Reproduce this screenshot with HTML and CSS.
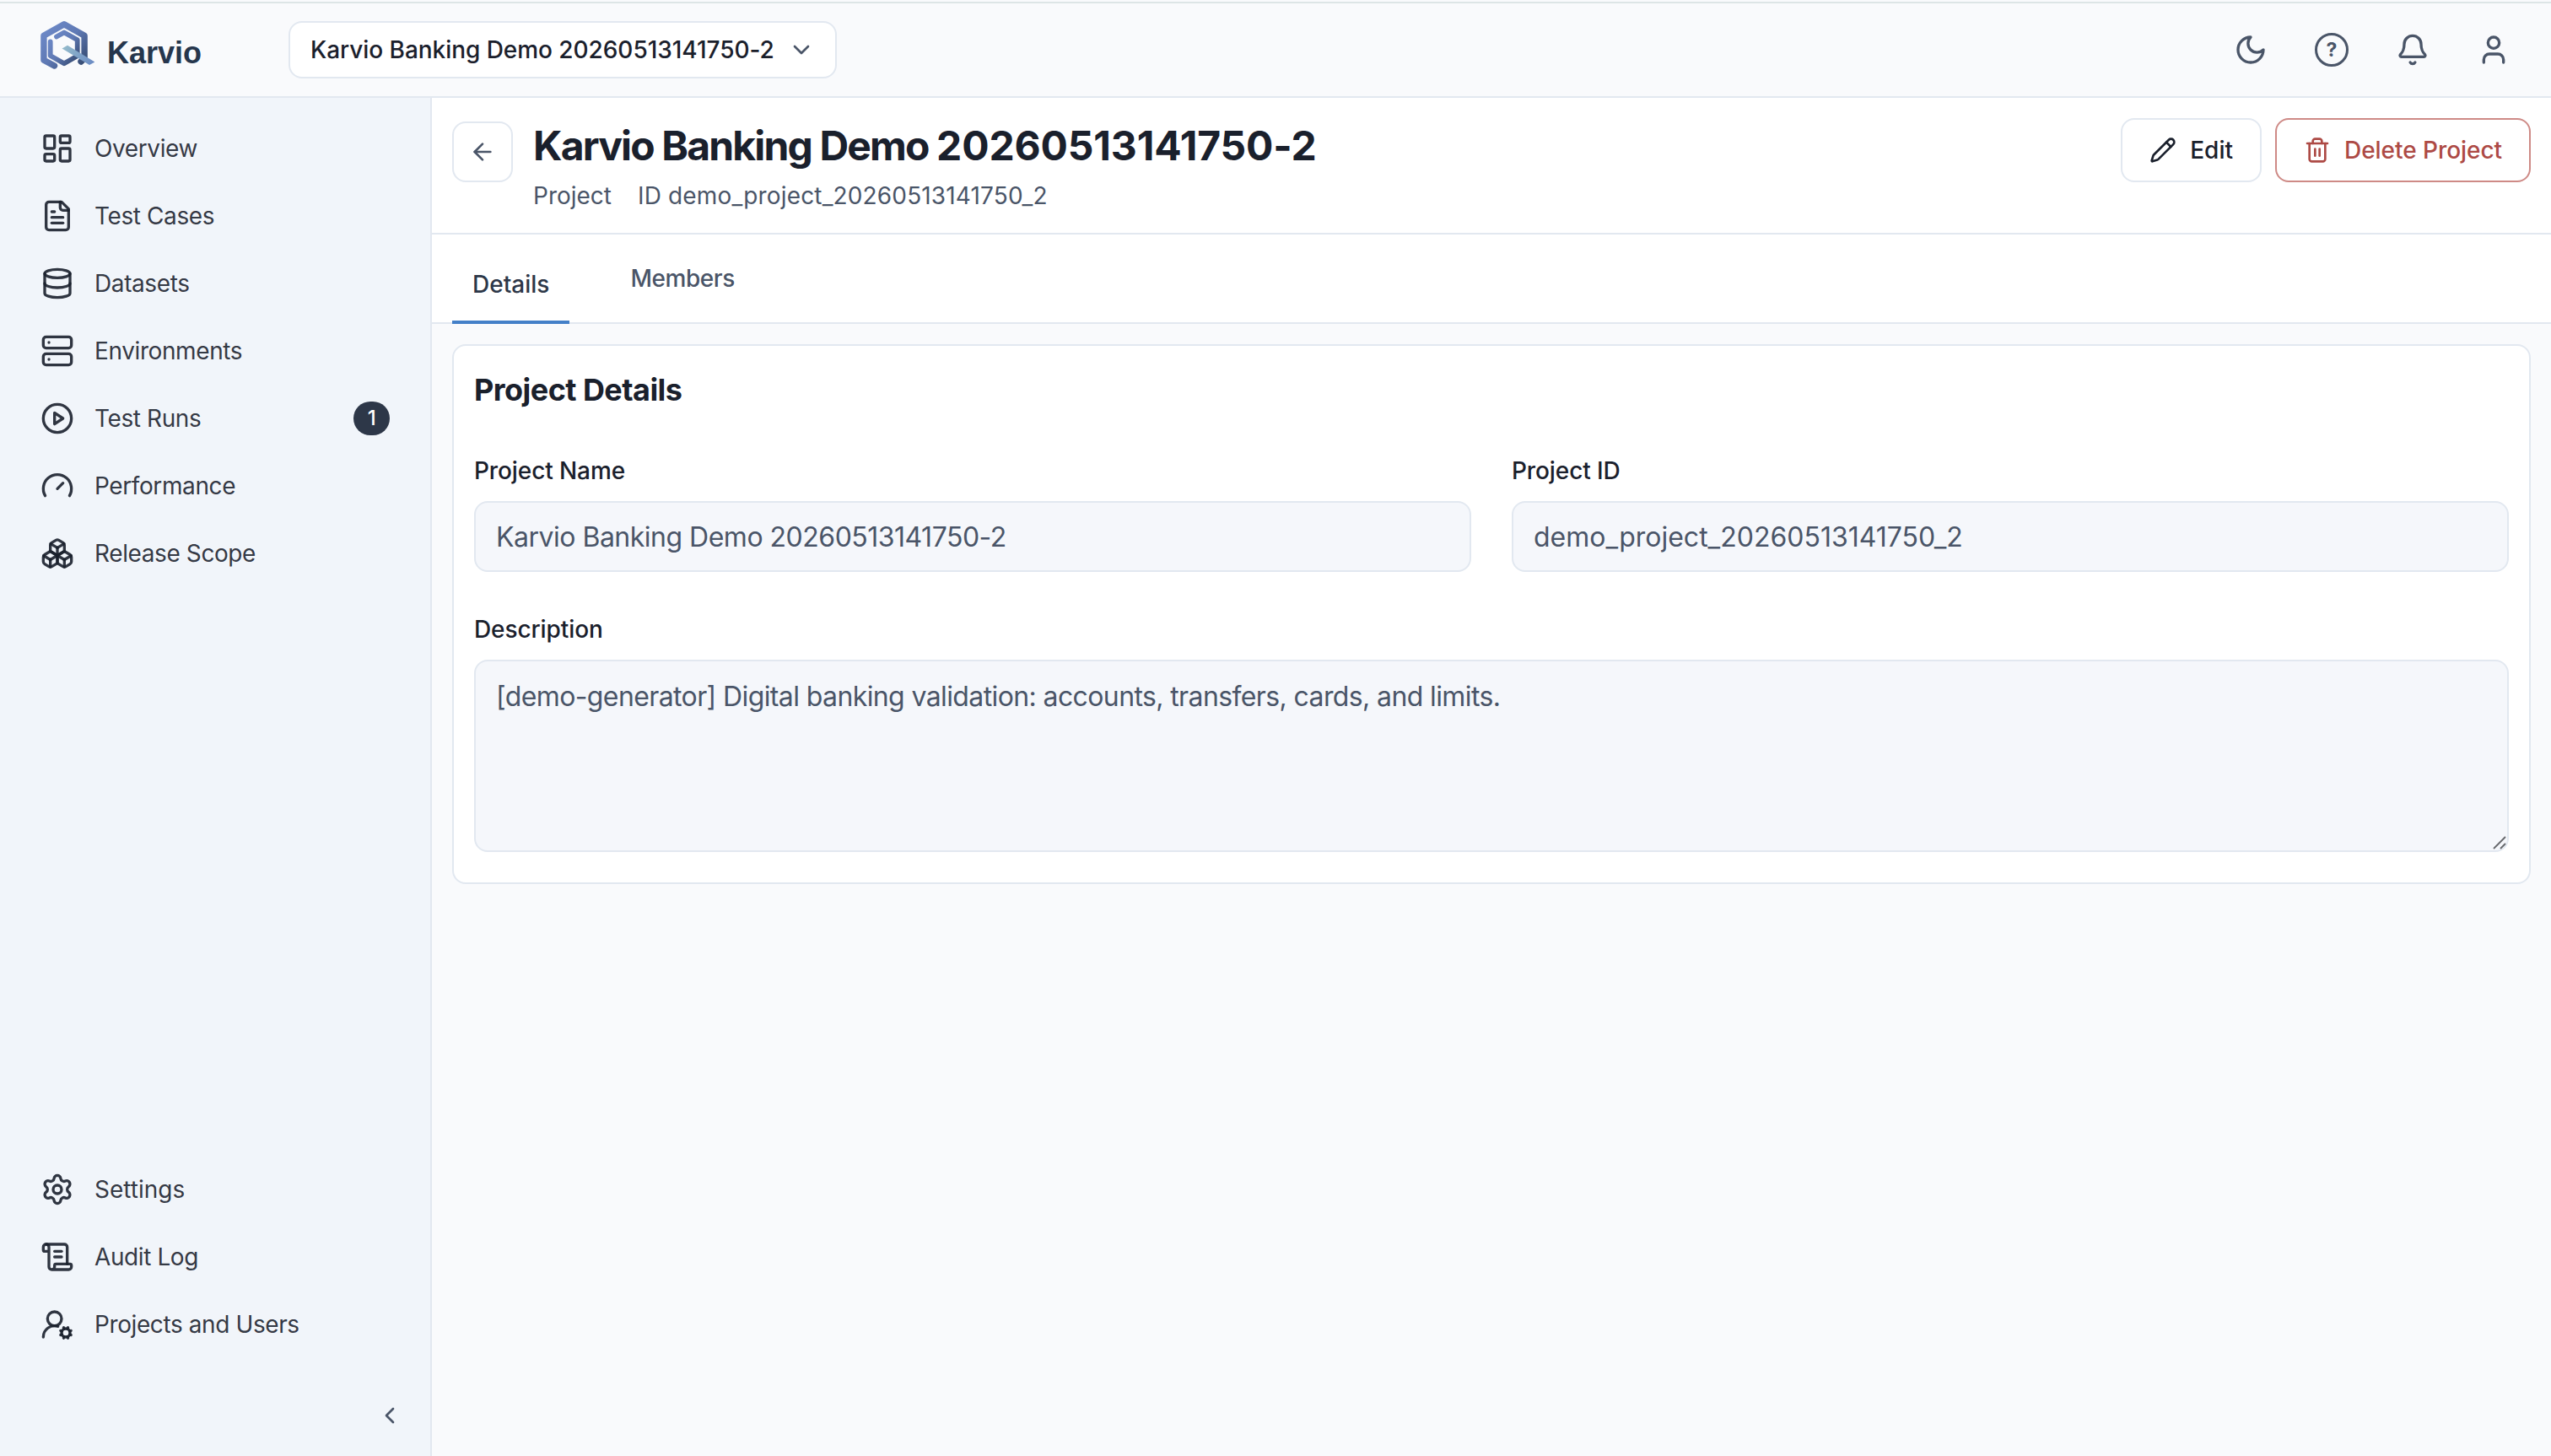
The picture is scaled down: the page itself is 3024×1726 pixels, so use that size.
FILE: index.html
```html
<!DOCTYPE html>
<html lang="en">
<head>
  <meta charset="utf-8">
  <title>Karvio</title>
  <link rel="stylesheet" href="styles.css">
</head>
<body>

  <header class="topbar">
    <div class="brand">
      <svg class="logo" viewBox="0 0 64 57">
        <defs>
          <linearGradient id="hexGrad" x1="0" y1="0" x2="1" y2="1">
            <stop offset="0" stop-color="#6f8bca"/>
            <stop offset="0.5" stop-color="#5f79b4"/>
            <stop offset="1" stop-color="#33486e"/>
          </linearGradient>
          <linearGradient id="tailGrad" gradientUnits="userSpaceOnUse" x1="26" y1="30" x2="62" y2="50">
            <stop offset="0" stop-color="#95bccb"/>
            <stop offset="1" stop-color="#6c8cc4"/>
          </linearGradient>
        </defs>
        <g fill="none" stroke="url(#hexGrad)" stroke-linecap="round" stroke-linejoin="round">
          <path stroke-width="7.4" d="M16.5 53 L3.9 46.2 V17.3 L28 3.8 L52.1 17.3 V44 L48 48"/>
          <path stroke-width="5.8" d="M19 18.5 L28 13.5 L43.7 22.3 V41.3 L28 50.2 L11.7 41 V24.5"/>
        </g>
        <path fill="url(#tailGrad)" d="M25.5 32.5 L32 28.7 L64.3 48.5 L58 52 Z"/>
      </svg>
      <span class="brand-name">Karvio</span>
    </div>

    <button class="project-select">
      Karvio Banking Demo 20260513141750-2
      <svg class="icon-sm" viewBox="0 0 24 24"><path d="m6 9 6 6 6-6"/></svg>
    </button>

    <div class="topbar-icons">
      <svg class="icon" viewBox="0 0 24 24"><path d="M12 3a6 6 0 0 0 9 9 9 9 0 1 1-9-9Z"/></svg>
      <span class="help">?</span>
      <svg class="icon" viewBox="0 0 24 24"><path d="M10.268 21a2 2 0 0 0 3.464 0"/><path d="M3.262 15.326A1 1 0 0 0 4 17h16a1 1 0 0 0 .74-1.673C19.41 13.956 18 12.499 18 8A6 6 0 0 0 6 8c0 4.499-1.411 5.956-2.738 7.326"/></svg>
      <svg class="icon" viewBox="0 0 24 24"><path d="M19 21v-2a4 4 0 0 0-4-4H9a4 4 0 0 0-4 4v2"/><circle cx="12" cy="7" r="4"/></svg>
    </div>
  </header>

  <div class="layout">
    <nav class="sidebar">
      <a class="nav-item">
        <svg class="icon" viewBox="0 0 24 24"><rect width="7" height="9" x="3" y="3" rx="1"/><rect width="7" height="5" x="14" y="3" rx="1"/><rect width="7" height="9" x="14" y="12" rx="1"/><rect width="7" height="5" x="3" y="16" rx="1"/></svg>
        Overview
      </a>
      <a class="nav-item">
        <svg class="icon" viewBox="0 0 24 24"><path d="M15 2H6a2 2 0 0 0-2 2v16a2 2 0 0 0 2 2h12a2 2 0 0 0 2-2V7Z"/><path d="M14 2v4a2 2 0 0 0 2 2h4"/><path d="M10 9H8"/><path d="M16 13H8"/><path d="M16 17H8"/></svg>
        Test Cases
      </a>
      <a class="nav-item">
        <svg class="icon" viewBox="0 0 24 24"><ellipse cx="12" cy="5" rx="9" ry="3"/><path d="M3 5v14a9 3 0 0 0 18 0V5"/><path d="M3 12a9 3 0 0 0 18 0"/></svg>
        Datasets
      </a>
      <a class="nav-item">
        <svg class="icon" viewBox="0 0 24 24"><rect width="20" height="8" x="2" y="2" rx="2"/><rect width="20" height="8" x="2" y="14" rx="2"/><path d="M6 6h.01"/><path d="M6 18h.01"/></svg>
        Environments
      </a>
      <a class="nav-item">
        <svg class="icon" viewBox="0 0 24 24"><circle cx="12" cy="12" r="10"/><path d="m10 8 6 4-6 4Z"/></svg>
        Test Runs
        <span class="badge">1</span>
      </a>
      <a class="nav-item">
        <svg class="icon" viewBox="0 0 24 24"><path d="m12 14 4-4"/><path d="M3.34 19a10 10 0 1 1 17.32 0"/></svg>
        Performance
      </a>
      <a class="nav-item">
        <svg class="icon" viewBox="0 0 24 24"><path d="M2.97 12.92A2 2 0 0 0 2 14.63v3.24a2 2 0 0 0 .97 1.71l3 1.8a2 2 0 0 0 2.06 0L12 19v-5.5l-5-3-4.03 2.42Z"/><path d="m7 16.5-4.74-2.85"/><path d="m7 16.5 5-3"/><path d="M7 16.5v5.17"/><path d="M12 13.5V19l3.97 2.38a2 2 0 0 0 2.06 0l3-1.8a2 2 0 0 0 .97-1.71v-3.24a2 2 0 0 0-.97-1.71L17 10.5l-5 3Z"/><path d="m17 16.5-5-3"/><path d="m17 16.5 4.74-2.85"/><path d="M17 16.5v5.17"/><path d="M7.97 4.42A2 2 0 0 0 7 6.13v4.37l5 3 5-3V6.13a2 2 0 0 0-.97-1.71l-3-1.8a2 2 0 0 0-2.06 0l-3 1.8Z"/><path d="M12 8 7.26 5.15"/><path d="m12 8 4.74-2.85"/><path d="M12 13.5V8"/></svg>
        Release Scope
      </a>

      <div class="nav-spacer"></div>

      <a class="nav-item nav-settings">
        <svg class="icon" viewBox="0 0 24 24"><path d="M9.671 4.136a2.34 2.34 0 0 1 4.659 0 2.34 2.34 0 0 0 3.319 1.915 2.34 2.34 0 0 1 2.33 4.033 2.34 2.34 0 0 0 0 3.831 2.34 2.34 0 0 1-2.33 4.033 2.34 2.34 0 0 0-3.319 1.915 2.34 2.34 0 0 1-4.659 0 2.34 2.34 0 0 0-3.32-1.915 2.34 2.34 0 0 1-2.33-4.033 2.34 2.34 0 0 0 0-3.831A2.34 2.34 0 0 1 6.35 6.051a2.34 2.34 0 0 0 3.319-1.915"/><circle cx="12" cy="12" r="3"/></svg>
        Settings
      </a>
      <a class="nav-item">
        <svg class="icon" viewBox="0 0 24 24"><path d="M15 12h-5"/><path d="M15 8h-5"/><path d="M19 17V5a2 2 0 0 0-2-2H4"/><path d="M8 21h12a2 2 0 0 0 2-2v-1a1 1 0 0 0-1-1H11a1 1 0 0 0-1 1v1a2 2 0 1 1-4 0V5a2 2 0 1 0-4 0v2a1 1 0 0 0 1 1h3"/></svg>
        Audit Log
      </a>
      <a class="nav-item">
        <svg class="icon" viewBox="0 0 24 24"><path d="m14.305 19.53.923-.382"/><path d="m15.228 16.852-.923-.383"/><path d="m16.852 15.228-.383-.923"/><path d="m16.852 20.772-.383.924"/><path d="m19.148 15.228.383-.923"/><path d="m19.53 21.696-.382-.924"/><path d="M2 21a8 8 0 0 1 10.434-7.62"/><path d="m20.772 16.852.924-.383"/><path d="m20.772 19.148.924.383"/><circle cx="10" cy="8" r="5"/><circle cx="18" cy="18" r="3"/></svg>
        Projects and Users
      </a>

      <div class="collapse">
        <svg class="icon-sm" viewBox="0 0 24 24"><path d="m15 18-6-6 6-6"/></svg>
      </div>
    </nav>

    <main class="content">
      <div class="page-header">
        <button class="back-btn">
          <svg class="icon-sm" viewBox="0 0 24 24"><path d="m12 19-7-7 7-7"/><path d="M19 12H5"/></svg>
        </button>
        <div class="page-title">
          <h1>Karvio Banking Demo <span class="stamp">20260513141750-2</span></h1>
          <div class="page-meta">
            <span>Project</span>
            <span class="page-id">ID demo_project_20260513141750_2</span>
          </div>
        </div>
        <div class="actions">
          <button class="btn">
            <svg class="icon-sm" viewBox="0 0 24 24"><path d="M21.174 6.812a1 1 0 0 0-3.986-3.987L3.842 16.174a2 2 0 0 0-.5.83l-1.321 4.352a.5.5 0 0 0 .623.622l4.353-1.32a2 2 0 0 0 .83-.497z"/><path d="m15 5 4 4"/></svg>
            Edit
          </button>
          <button class="btn btn-danger">
            <svg class="icon-sm" viewBox="0 0 24 24"><path d="M3 6h18"/><path d="M19 6v14c0 1-1 2-2 2H7c-1 0-2-1-2-2V6"/><path d="M8 6V4c0-1 1-2 2-2h4c1 0 2 1 2 2v2"/><path d="M10 11v6"/><path d="M14 11v6"/></svg>
            Delete Project
          </button>
        </div>
      </div>

      <div class="tabs">
        <div class="tab active">Details</div>
        <div class="tab">Members</div>
      </div>

      <section class="card">
        <h2>Project Details</h2>
        <div class="form-grid">
          <div class="field">
            <label for="projectName">Project Name</label>
            <input id="projectName" type="text" value="Karvio Banking Demo 20260513141750-2" readonly>
          </div>
          <div class="field">
            <label for="projectId">Project ID</label>
            <input id="projectId" type="text" value="demo_project_20260513141750_2" readonly>
          </div>
          <div class="field field-wide">
            <label for="description">Description</label>
            <div class="textarea-wrap">
              <textarea id="description" readonly>[demo-generator] Digital banking validation: accounts, transfers, cards, and limits.</textarea>
              <svg class="resize-grip" viewBox="0 0 16 16"><path d="M1 15 15 1M9 15l6-6"/></svg>
            </div>
          </div>
        </div>
      </section>
    </main>
  </div>

</body>
</html>
```
FILE: styles.css
```css
* {
  box-sizing: border-box;
}

body {
  margin: 0;
  height: 1726px;
  display: flex;
  flex-direction: column;
  font-family: Inter, "Liberation Sans", sans-serif;
  font-size: 28px;
  line-height: 40px;
  color: #1a202c;
  background: #f9fafc;
  overflow: hidden;
}

button, input, textarea {
  font: inherit;
  color: inherit;
  margin: 0;
}

svg {
  display: block;
  flex-shrink: 0;
  fill: none;
}

.icon, .icon-sm {
  width: 40px;
  height: 40px;
  stroke: currentColor;
  stroke-width: 2;
  stroke-linecap: round;
  stroke-linejoin: round;
}

.icon-sm {
  width: 32px;
  height: 32px;
}

/* top bar */
.topbar {
  height: 114px;
  margin-top: 2px;
  border-top: 2px solid #dde5e6;
  border-bottom: 2px solid #e2e8f0;
  display: flex;
  align-items: center;
  flex-shrink: 0;
  padding-right: 48px;
}

.brand {
  width: 342px;
  padding-left: 48px;
  display: flex;
  align-items: center;
}

.logo {
  width: 64px;
  height: 57px;
  margin-bottom: 11px;
}

.brand-name {
  margin-left: 15px;
  padding-top: 8px;
  font-family: "Liberation Sans", Arial, sans-serif;
  font-size: 36px;
  font-weight: 700;
  color: #26364d;
}

.project-select {
  height: 68px;
  width: 650px;
  display: flex;
  align-items: center;
  justify-content: space-between;
  padding: 0 24px;
  border: 2px solid #e2e8f0;
  border-radius: 16px;
  background: #fff;
  font-weight: 500;
  letter-spacing: -0.05px;
  white-space: nowrap;
}

.project-select svg {
  color: #4a5568;
}

.topbar-icons {
  margin-left: auto;
  display: flex;
  gap: 56px;
  color: #4a5568;
}

.help {
  width: 40px;
  height: 40px;
  border: 3px solid #4a5568;
  border-radius: 50%;
  font-size: 23px;
  font-weight: 700;
  line-height: 34px;
  text-align: center;
}

/* sidebar */
.layout {
  flex: 1;
  display: flex;
  min-height: 0;
}

.sidebar {
  width: 512px;
  flex-shrink: 0;
  padding: 20px 48px 32px;
  display: flex;
  flex-direction: column;
  background: #f1f5fa;
  border-right: 2px solid #e2e8f0;
}

.nav-item {
  height: 80px;
  display: flex;
  align-items: center;
  gap: 24px;
  color: rgba(26, 32, 44, 0.9);
  letter-spacing: -0.4px;
}

.nav-settings {
  letter-spacing: 0;
}

.nav-spacer {
  flex: 1;
}

.badge {
  margin-left: auto;
  width: 43px;
  height: 40px;
  border-radius: 20px;
  background: #2d3748;
  color: #fff;
  font-size: 24px;
  font-weight: 500;
  text-align: center;
}

.collapse {
  margin: 52px -16px 0 0;
  display: flex;
  justify-content: flex-end;
  color: #4a5568;
}

/* page header */
.content {
  flex: 1;
  min-width: 0;
}

.page-header {
  height: 162px;
  padding: 24px 24px 0;
  display: flex;
  align-items: flex-start;
  background: #fff;
  border-bottom: 2px solid #e2e8f0;
}

.back-btn {
  width: 72px;
  height: 72px;
  margin-top: 4px;
  padding: 0;
  display: flex;
  align-items: center;
  justify-content: center;
  border: 2px solid #e2e8f0;
  border-radius: 16px;
  background: #fff;
  color: #4a5568;
}

.page-title {
  margin-left: 24px;
}

h1 {
  margin: 0;
  font-size: 48px;
  line-height: 66px;
  font-weight: 650;
  letter-spacing: -1.85px;
}

.stamp {
  letter-spacing: -0.15px;
}

.page-meta {
  display: flex;
  gap: 32px;
  margin-top: 6px;
  color: #4a5568;
}

.page-id {
  margin-left: -1px;
  letter-spacing: 0.15px;
}

.actions {
  margin-left: auto;
  display: flex;
  gap: 16px;
}

.btn {
  height: 76px;
  padding: 0 32px;
  display: flex;
  align-items: center;
  gap: 16px;
  border: 2px solid #e2e8f0;
  border-radius: 16px;
  background: #fff;
  font-weight: 500;
}

.btn-danger {
  border-color: #ce8a86;
  color: #ad4a45;
  letter-spacing: -0.05px;
}

/* tabs */
.tabs {
  height: 106px;
  padding: 0 24px;
  display: flex;
  gap: 48px;
  background: #fff;
  border-bottom: 2px solid #e2e8f0;
  font-weight: 500;
}

.tab {
  padding: 32px 24px 0;
  color: #4a5568;
  letter-spacing: -0.45px;
}

.tab.active {
  height: 106px;
  padding-top: 39px;
  color: #2d3748;
  border-bottom: 4px solid #4480c8;
  letter-spacing: 0;
}

/* details card */
.card {
  margin: 24px 24px 0;
  height: 640px;
  padding: 24px;
  background: #fff;
  border: 2px solid #e2e8f0;
  border-radius: 16px;
}

h2 {
  margin: 3px 0 51px;
  font-size: 36px;
  line-height: 50px;
  font-weight: 650;
  letter-spacing: -0.55px;
}

.form-grid {
  display: grid;
  grid-template-columns: 1fr 1fr;
  gap: 48px;
}

.field {
  display: flex;
  flex-direction: column;
}

.field-wide {
  grid-column: span 2;
}

.field label {
  font-weight: 500;
  letter-spacing: -0.1px;
  margin-bottom: 16px;
}

.field input, .field textarea {
  width: 100%;
  height: 84px;
  padding: 0 24px;
  border: 2px solid #e2e8f0;
  border-radius: 16px;
  background: #f5f7fb;
  color: #4a5568;
  font-size: 32px;
  letter-spacing: -0.5px;
  outline: none;
}

#projectId {
  letter-spacing: 0;
}

.textarea-wrap {
  position: relative;
}

.field textarea {
  display: block;
  height: 228px;
  padding-top: 20px;
  line-height: 44px;
  letter-spacing: -0.61px;
  resize: none;
}

.resize-grip {
  position: absolute;
  right: 3px;
  bottom: 3px;
  width: 16px;
  height: 16px;
  stroke: #66686c;
  stroke-width: 1.8;
}
```
